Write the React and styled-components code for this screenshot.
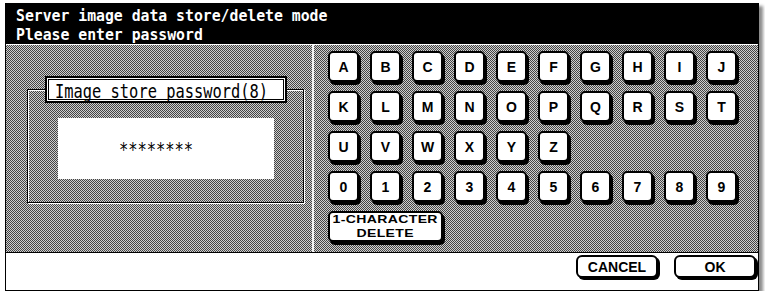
import styled, { createGlobalStyle } from "styled-components";

const GlobalStyle = createGlobalStyle`
    html, body {
        margin: 0;
        padding: 0;
        background: #fff;
    }
`;

const ROWS = [
    ["A", "B", "C", "D", "E", "F", "G", "H", "I", "J"],
    ["K", "L", "M", "N", "O", "P", "Q", "R", "S", "T"],
    ["U", "V", "W", "X", "Y", "Z"],
    ["0", "1", "2", "3", "4", "5", "6", "7", "8", "9"],
];

export default function App() {
    return (
        <>
            <GlobalStyle />
            <Frame>
                <Header>
                    <HeaderText>
                        <div>Server image data store/delete mode</div>
                        <div>Please enter password</div>
                    </HeaderText>
                </Header>

                <Body>
                    <LeftPane>
                        <GroupBox>
                            <GroupLabel>
                                <MonoText>Image store password(8)</MonoText>
                            </GroupLabel>
                            <PasswordField>
                                <MonoText>********</MonoText>
                            </PasswordField>
                        </GroupBox>
                    </LeftPane>

                    <KeyPad>
                        {ROWS.map((row) =>
                            row.map((ch, i) => (
                                <Key key={ch} $newRow={i === 0}>
                                    {ch}
                                </Key>
                            ))
                        )}
                        <Key $newRow $span={3}>
                            <WideLabel>
                                1-CHARACTER
                                <br />
                                DELETE
                            </WideLabel>
                        </Key>
                    </KeyPad>
                </Body>

                <Footer>
                    <FooterButton>CANCEL</FooterButton>
                    <FooterButton>OK</FooterButton>
                </Footer>
            </Frame>
        </>
    );
}

const Frame = styled.div`
    box-sizing: border-box;
    margin: 3px 0 0 5px;
    width: 754px;
    border: 1px solid #000;
    box-shadow: 4px 3px 3px rgba(0, 0, 0, 0.45);
    display: flex;
    flex-direction: column;
`;

const Header = styled.div`
    box-sizing: border-box;
    height: 41px;
    background: #000;
    border-bottom: 1px solid #fff;
    padding: 2px 0 0 10px;
    overflow: hidden;
`;

const HeaderText = styled.div`
    color: #fff;
    font-family: "DejaVu Sans Mono", monospace;
    font-weight: bold;
    font-size: 15.4px;
    line-height: 18px;
    white-space: nowrap;
    transform: scale(0.96, 1.06);
    transform-origin: left top;
`;

const Body = styled.div`
    display: grid;
    grid-template-columns: 308px 1fr;
    height: 207px;
    background: repeating-conic-gradient(#444 0 25%, #cfcfcf 0 50%) 0 0 / 2px 2px;
    border-bottom: 1px solid #000;
`;

const LeftPane = styled.div`
    box-sizing: border-box;
    border-right: 2px solid #f2f2f2;
    padding: 44px 8px 0 21px;
`;

const GroupBox = styled.div`
    box-sizing: border-box;
    height: 114px;
    border: 1px solid #000;
    box-shadow: inset 1px 1px 0 #fff, 1px 1px 0 #fff;
    display: flex;
    flex-direction: column;
    align-items: center;
`;

const GroupLabel = styled.div`
    box-sizing: border-box;
    align-self: flex-start;
    margin: -14px 0 0 17px;
    width: 242px;
    height: 27px;
    background: #fff;
    border: 2px solid #000;
    box-shadow: inset 0 0 0 1px #fff, inset 0 0 0 2px #000;
    padding: 3px 0 0 8px;
    overflow: hidden;
`;

const MonoText = styled.div`
    font-family: "DejaVu Sans Mono", monospace;
    font-size: 19px;
    line-height: 20px;
    color: #000;
    white-space: nowrap;
    transform: scaleX(0.81);
    transform-origin: left top;
`;

const PasswordField = styled.div`
    box-sizing: border-box;
    margin-top: 15px;
    width: 216px;
    height: 61px;
    background: #fff;
    padding: 21px 0 0 61px;
`;

const KeyPad = styled.div`
    display: grid;
    grid-template-columns: repeat(10, 31px);
    grid-auto-rows: 31px;
    column-gap: 11px;
    row-gap: 9px;
    padding: 6px 0 0 14px;
    align-content: start;
`;

const Key = styled.div`
    box-sizing: border-box;
    grid-column: ${(p) => (p.$newRow ? "1" : "auto")} / span ${(p) => p.$span || 1};
    background: #fff;
    border: 2px solid #000;
    border-radius: 5px;
    box-shadow: 2px 3px 0 #000;
    display: flex;
    align-items: center;
    justify-content: center;
    text-align: center;
    font-family: "Liberation Sans", Arial, sans-serif;
    font-weight: bold;
    font-size: 14px;
    line-height: 16px;
    white-space: nowrap;
    color: #000;
`;

const WideLabel = styled.span`
    display: block;
    font-size: 11.5px;
    line-height: 13.4px;
    letter-spacing: 0.3px;
    transform: scale(1.22, 1);
`;

const Footer = styled.div`
    box-sizing: border-box;
    height: 37px;
    background: #fff;
    display: flex;
    justify-content: flex-end;
    align-items: flex-start;
    gap: 16px;
    padding: 2px 2px 0 0;
`;

const FooterButton = styled.div`
    box-sizing: border-box;
    width: 82px;
    height: 23px;
    background: #fff;
    border: 2px solid #000;
    border-radius: 6px;
    box-shadow: 2px 2px 0 #000;
    display: flex;
    align-items: center;
    justify-content: center;
    font-family: "Liberation Sans", Arial, sans-serif;
    font-weight: bold;
    font-size: 14px;
    color: #000;
`;
